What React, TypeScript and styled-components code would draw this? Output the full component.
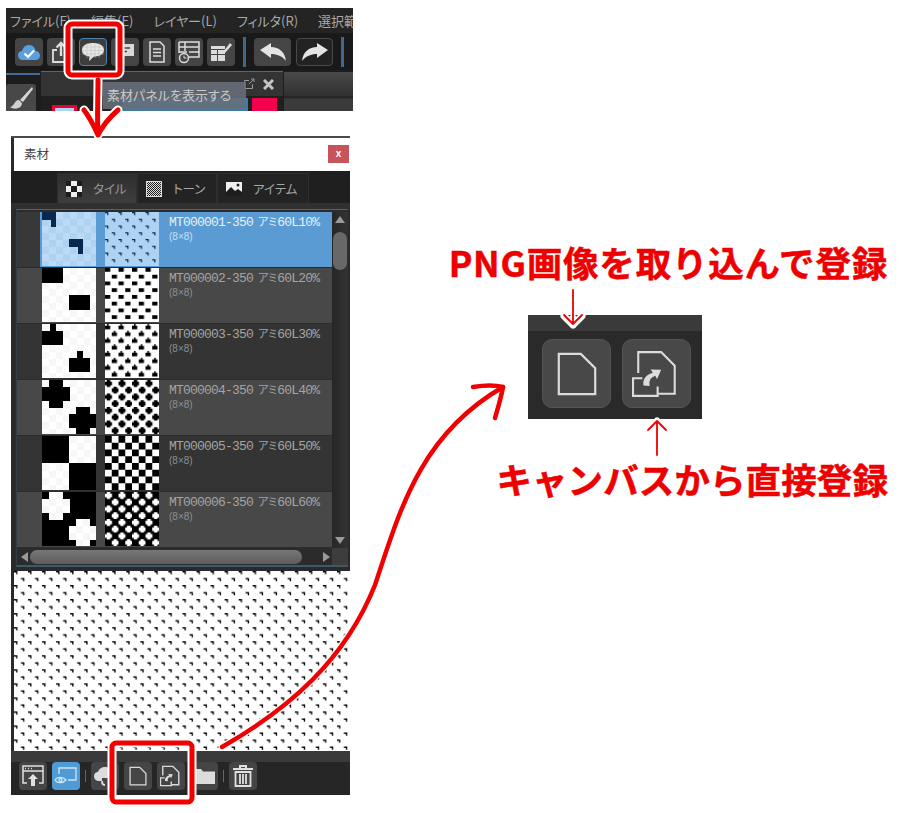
import React from 'react';
import styled, { createGlobalStyle } from 'styled-components';

const JP = `"Noto Sans CJK JP", "Noto Sans", sans-serif`;

const GlobalStyle = createGlobalStyle`
  html, body {
    margin: 0;
    background: #fff;
    font-family: ${JP};
  }
`;

const Page = styled.div`
  position: relative;
  width: 900px;
  height: 813px;
  overflow: hidden;
  display: flex;
  background: #fff;
`;

const LeftColumn = styled.div`
  width: 347px;
  margin-left: 6px;
  padding-top: 8px;
  display: flex;
  flex-direction: column;
`;

/* top screenshot */
const AppShot = styled.div`
  height: 103px;
  overflow: hidden;
  background: #222;
`;

const MenuBar = styled.div`
  height: 25px;
  display: flex;
  align-items: center;
  gap: 20px;
  padding-left: 4px;
  background: #242424;
  white-space: nowrap;
`;

const MenuItem = styled.span`
  font-size: 13px;
  font-feature-settings: "palt";
  color: #a8a8a8;
`;

const Toolbar = styled.div`
  height: 37px;
  display: flex;
  align-items: center;
  padding-left: 9px;
  background: #191919;
`;

const ToolGroup = styled.div<{ $gap: number }>`
  display: flex;
  gap: ${p => p.$gap}px;
`;

const Divider = styled.div<{ $space: number }>`
  width: 3px;
  height: 30px;
  margin: 0 ${p => p.$space}px 0 8px;
  background: #41678a;
`;

const ToolButton = styled.div<{ $tone?: 'selected' | 'dark' | 'active'; $wide?: boolean }>`
  width: ${p => (p.$wide ? 37 : 28)}px;
  height: 28px;
  box-sizing: border-box;
  display: flex;
  align-items: center;
  justify-content: center;
  border-radius: 4px;
  background: ${p => (p.$tone === 'active' ? '#4f9bd6' : p.$tone === 'selected' ? '#3d3d3d' : p.$tone === 'dark' ? '#222' : '#454545')};
  border: 1px solid ${p => (p.$tone === 'selected' ? '#4c82ad' : p.$tone === 'dark' ? '#484848' : 'transparent')};
`;

const ShotPanels = styled.div`
  position: relative;
  height: 41px;
  overflow: hidden;
  display: flex;
  gap: 1px;
  background: #1d1d1d;
`;

const BrushDock = styled.div`
  width: 34px;
  height: 38px;
  border-top: 2px solid #3f6c92;
  margin-top: 3px;
  box-sizing: border-box;
  display: flex;
  align-items: flex-end;
`;

const BrushButton = styled.div`
  width: 30px;
  height: 27px;
  background: #484848;
  border-radius: 3px 3px 0 0;
  display: flex;
  align-items: center;
  justify-content: center;
`;

const ColorPanel = styled.div`
  width: 242px;
  height: 40px;
  display: flex;
  flex-direction: column;
  border-top: 1px solid #3f6c92;
  margin-top: 1px;
  box-sizing: border-box;
`;

const ColorHead = styled.div`
  height: 24px;
  flex: none;
  display: flex;
  align-items: center;
  justify-content: flex-end;
  gap: 8px;
  padding-right: 9px;
  background: #333;
`;

const ColorBody = styled.div`
  flex: 1;
  min-height: 0;
  display: flex;
  background: #202020;
`;

const Swatch = styled.div<{ $top: number; $left: number; $width: number; $fill: string; $edge?: string }>`
  box-sizing: border-box;
  width: ${p => p.$width}px;
  height: 24px;
  flex: none;
  margin-top: ${p => p.$top}px;
  margin-left: ${p => p.$left}px;
  background: ${p => p.$fill};
  border: ${p => (p.$edge ? `3px solid ${p.$edge}` : '0')};
`;

const SideDock = styled.div`
  flex: 1;
  margin-top: 2px;
  background: linear-gradient(#4a4a4a, #303030 24px, #1c1c1c 25px, #3b3b3b 27px);
`;

const Tooltip = styled.div`
  position: absolute;
  left: 97px;
  top: 12px;
  width: 143px;
  height: 27px;
  line-height: 25px;
  padding-left: 4px;
  box-sizing: border-box;
  font-size: 13px;
  font-feature-settings: "palt";
  color: #c9c9c9;
  white-space: nowrap;
  background: rgba(104, 112, 122, 0.88);
`;

/* material panel */
const MaterialPanel = styled.div`
  width: 339px;
  height: 659px;
  margin: 25px 0 0 5px;
  display: flex;
  flex-direction: column;
  background: #2a2a2a;
  border-top: 2px solid #4a4a4a;
  box-sizing: border-box;
`;

const TitleBar = styled.div`
  height: 33px;
  flex: none;
  display: flex;
  align-items: center;
  justify-content: space-between;
  margin-left: 3px;
  padding: 0 1px 2px 10px;
  box-sizing: border-box;
  background: #fff;
  font-size: 12.5px;
  color: #444;
`;

const CloseButton = styled.div`
  width: 21px;
  height: 18px;
  display: flex;
  align-items: center;
  justify-content: center;
  background: #c9535a;
  color: #fff;
  font: bold 10px "Liberation Sans", sans-serif;
`;

const TabRow = styled.div`
  height: 38px;
  flex: none;
  display: flex;
  padding: 2px 0 0 46px;
  box-sizing: border-box;
  background: linear-gradient(#1f1f1f 32px, #303030 32px);
`;

const Tab = styled.div<{ $active?: boolean; $width: number }>`
  width: ${p => p.$width}px;
  height: 30px;
  box-sizing: border-box;
  display: flex;
  align-items: center;
  gap: 11px;
  padding-left: 8px;
  font-size: 12.5px;
  font-feature-settings: "palt";
  color: ${p => (p.$active ? '#999' : '#a5a5a5')};
  background: ${p => (p.$active ? 'linear-gradient(#2e2e2e, #3e3e3e)' : '#232323')};
  border: 1px solid #2f2f2f;
  border-bottom: 0;
`;

const ListFrame = styled.div`
  margin-left: 5px;
  margin-right: 2px;
  height: 358px;
  flex: none;
  box-sizing: border-box;
  display: grid;
  grid-template-columns: 315px 16px;
  grid-template-rows: 336px 17px;
  padding-top: 2px;
  background: #2b2b2b;
  border-top: 1px solid #3d6a8c;
  border-bottom: 2px solid #3c5a6e;
  border-left: 1px solid #2f3f4a;
`;

const Rows = styled.div`
  display: flex;
  flex-direction: column;
  gap: 1px;
  overflow: hidden;
`;

const Row = styled.div<{ $selected: boolean; $dark: boolean }>`
  height: 55px;
  flex: none;
  display: flex;
  background: ${p => (p.$selected ? '#5a9bd3' : p.$dark ? '#343434' : '#484848')};
`;

const RowGutter = styled.div<{ $selected: boolean }>`
  width: 23px;
  flex: none;
  margin-right: 2px;
  background: ${p => (p.$selected ? '#383838' : 'transparent')};
`;

const Thumb = styled.svg`
  width: 54px;
  height: 54px;
  flex: none;
  display: block;
`;

const PatternThumb = styled(Thumb)`
  margin: 0 10px 0 9px;
`;

const RowText = styled.div<{ $selected: boolean }>`
  color: ${p => (p.$selected ? '#e6f0f8' : '#a4a4a4')};
  padding-top: 1px;
  white-space: nowrap;
`;

const RowName = styled.div`
  font-family: "Liberation Mono", ${JP};
  font-size: 13px;
  letter-spacing: -0.8px;
  line-height: 16px;
`;

const Kana = styled.span`
  font-family: ${JP};
  font-size: 11px;
  font-feature-settings: "palt";
  letter-spacing: 0;
  margin-left: 5px;
`;

const RowSize = styled.div`
  font-family: "Liberation Sans", sans-serif;
  font-size: 10px;
  line-height: 12px;
  opacity: 0.8;
`;

const VScroll = styled.div`
  display: flex;
  flex-direction: column;
  align-items: center;
  justify-content: space-between;
  padding: 3px 0;
  box-sizing: border-box;
  position: relative;
  background: linear-gradient(90deg, #262626, #333);
`;

const VThumb = styled.div`
  position: absolute;
  top: 20px;
  left: 1px;
  width: 14px;
  height: 38px;
  border-radius: 7px;
  background: #686868;
`;

const HScroll = styled.div`
  display: flex;
  align-items: center;
  padding: 0 3px;
  background: #2b2b2b;
`;

const HThumb = styled.div`
  width: 272px;
  height: 14px;
  margin: 0 21px 0 2px;
  border-radius: 7px;
  background: linear-gradient(#777, #5d5d5d);
  flex: none;
`;

const Corner = styled.div`
  background: #3d3d3d;
`;

const Triangle = styled.div<{ $dir: 'up' | 'down' | 'left' | 'right' }>`
  width: 0;
  height: 0;
  flex: none;
  z-index: 1;
  border-style: solid;
  border-color: transparent;
  ${p => (p.$dir === 'up' || p.$dir === 'down' ? 'border-width: 7px 5px; ' : 'border-width: 5px 7px; ')}
  ${p => `border-${{ up: 'bottom', down: 'top', left: 'right', right: 'left' }[p.$dir]}-color: #9a9a9a;`}
  ${p => `margin-${p.$dir === 'up' ? 'top' : p.$dir === 'down' ? 'bottom' : p.$dir === 'left' ? 'left' : 'right'}: -6px;`}
`;

const Preview = styled.svg`
  display: block;
  width: 336px;
  height: 180px;
  flex: none;
  margin: 4px 0 0 3px;
`;

const BottomBar = styled.div`
  flex: 1;
  display: flex;
  align-items: flex-start;
  gap: 5px;
  padding: 11px 0 0 8px;
  background: linear-gradient(#3a3a3a 11px, #262626 11px);
`;

const BarDivider = styled.div`
  width: 1px;
  height: 12px;
  margin: 8px 0;
  background: #666;
`;

/* right side callout */
const RightColumn = styled.div`
  flex: 1;
  display: flex;
  flex-direction: column;
  align-items: flex-end;
  padding: 237px 12px 0 0;
`;

const Heading = styled.div<{ $space: number; $tracking: number }>`
  font-size: 35.5px;
  font-weight: 700;
  line-height: 50px;
  letter-spacing: ${p => p.$tracking}px;
  -webkit-text-stroke: 0.5px #ef0000;
  color: #ef0000;
  white-space: nowrap;
  margin-top: ${p => p.$space}px;
`;

const Callout = styled.div`
  width: 174px;
  height: 104px;
  margin: 28px 186px 0 0;
  box-sizing: border-box;
  display: flex;
  gap: 11px;
  padding: 24px 0 0 14px;
  background: linear-gradient(#3a3a3a 16px, #2a2a2a 16px);
`;

const CalloutButton = styled.div`
  width: 69px;
  height: 69px;
  box-sizing: border-box;
  border-radius: 10px;
  border: 1px solid #545454;
  background: #484848;
  display: flex;
  align-items: center;
  justify-content: center;
`;

const Annotations = styled.svg`
  position: absolute;
  left: 0;
  top: 0;
  width: 900px;
  height: 813px;
  pointer-events: none;
`;

/* icons */
const DocIcon = ({ size, stroke = 1.15 }: { size: number; stroke?: number }) => (
  <svg width={size} height={size} viewBox="0 0 24 24" fill="none" stroke="#dcdcdc" strokeWidth={stroke}>
    <path d="M2.500 1.500H14L21.500 9V22.500H2.500Z" />
  </svg>
);

const CanvasDocIcon = ({ size, stroke = 1 }: { size: number; stroke?: number }) => (
  <svg width={size} height={size} viewBox="0 0 24 24" fill="none" stroke="#dcdcdc" strokeWidth={stroke}>
    <path d="M3 11.500V1.500H14L20.500 8V21.500H12.300" />
    <path d="M5 14H0.500V22.500H12.300V18" />
    <path d="M5.500 17.500C5 14.500 7 12 10 11.500L9 9.800L14 10L12 14.500L11.200 12.800C9 13.500 8 15 8.500 17.800Z" fill="#dcdcdc" stroke="none" />
  </svg>
);

const CloudCheck = () => (
  <svg width="24" height="20" viewBox="0 0 24 20">
    <path d="M6 18C2.500 18 1 15.500 1 13C1 10.500 3 9 5 9C6 5 9 3 12 3C16 3 18.500 6 18.500 9C21 9 23 11 23 13.500C23 16.500 21 18 18 18Z" fill="#5b9fe0" />
    <path d="M7.500 11.500L11 15L17 8.500" fill="none" stroke="#fff" strokeWidth="2.200" />
  </svg>
);

const ShareIcon = () => (
  <svg width="22" height="24" viewBox="0 0 22 24" fill="none" stroke="#ddd" strokeWidth="1.800">
    <path d="M7 10H3V22H19V10H15" />
    <path d="M11 16V3M6.500 7.500L11 3L15.500 7.500" strokeWidth="2.400" />
  </svg>
);

const BalloonIcon = () => (
  <svg width="24" height="22" viewBox="0 0 24 22">
    <path d="M12 2C18 2 23 4.500 23 9C23 13.500 18 15.500 13 15.500L8 20L8.500 15.500C4 15 1 12.500 1 9C1 4.500 6 2 12 2Z" fill="#e6e6e6" />
    <path d="M1 6H23M1 9.500H23M1 13H23M6 2V17M10 2V17M14 2V17M18 2V17" stroke="#bbb" strokeWidth="0.500" />
  </svg>
);

const NoteIcon = () => (
  <svg width="22" height="20" viewBox="0 0 22 20">
    <path d="M2 2H20V14H11L6 18V14H2Z" fill="#d9d9d9" />
    <path d="M6 6H16M6 9.500H13" stroke="#454545" strokeWidth="1.600" />
  </svg>
);

const PageIcon = () => (
  <svg width="18" height="22" viewBox="0 0 18 22" fill="none" stroke="#ddd" strokeWidth="1.500">
    <path d="M2 1H12L16 5V21H2Z" />
    <path d="M5 8H13M5 11.500H13M5 15H13" />
  </svg>
);

const ListClockIcon = () => (
  <svg width="24" height="24" viewBox="0 0 24 24" fill="none" stroke="#ddd" strokeWidth="1.500">
    <path d="M2 2H22V17H12M2 2V13M2 7H22M2 12H10M8 2V11M22 12H12" />
    <circle cx="7" cy="18" r="4.500" />
    <path d="M7 15.500V18H9.500" strokeWidth="1" />
  </svg>
);

const TablePenIcon = () => (
  <svg width="24" height="24" viewBox="0 0 24 24">
    <path d="M2 6H16V9H2ZM2 10H8V14H2ZM9 10H16V14H9ZM2 15H8V21H2ZM9 15H16V21H9Z" fill="#dcdcdc" />
    <path d="M14 12L21 3L23 5L16 13Z" fill="#dcdcdc" />
  </svg>
);

const TurnArrow = ({ flip }: { flip?: boolean }) => (
  <svg width="28" height="20" viewBox="0 0 28 20" style={flip ? { transform: 'scaleX(-1)' } : undefined}>
    <path d="M1 8L12 1V5C20 5 26 10 27 19C23 14 18 12 12 12V16Z" fill="#e4e4e4" />
  </svg>
);

const BrushIcon = () => (
  <svg width="26" height="26" viewBox="0 0 26 26">
    <path d="M24 2L12 15L15 17L25 4Z" fill="#d6d6d6" />
    <path d="M11 15C6 15 7 21 2 22C6 25 14 24 14 18Z" fill="#cfcfcf" />
  </svg>
);

const DetachIcon = () => (
  <svg width="12" height="12" viewBox="0 0 12 12" fill="none" stroke="#9a9a9a" strokeWidth="1">
    <path d="M6 2.500H1.500V10.500H9.500V6M6 6L11 1M8 1H11V4" />
  </svg>
);

const CloseGlyph = () => (
  <svg width="11" height="11" viewBox="0 0 11 11" stroke="#c4c4c4" strokeWidth="3">
    <path d="M1 1L10 10M10 1L1 10" />
  </svg>
);

const TileTabIcon = () => (
  <svg width="16" height="16" viewBox="0 0 16 16">
    <rect width="16" height="16" fill="#eee" />
    <path d="M0 0H5V5H0ZM11 0H16V5H11ZM5 5H11V11H5ZM0 11H5V16H0ZM11 11H16V16H11Z" fill="#1d1d1d" />
  </svg>
);

const ToneTabIcon = () => (
  <svg width="16" height="16" viewBox="0 0 16 16">
    <defs>
      <pattern id="tone-tab" width="2" height="2" patternUnits="userSpaceOnUse">
        <rect width="2" height="2" fill="#222" />
        <rect width="1" height="1" fill="#ddd" />
        <rect x="1" y="1" width="1" height="1" fill="#ddd" />
      </pattern>
    </defs>
    <rect x="0.500" y="0.500" width="15" height="15" fill="url(#tone-tab)" stroke="#ddd" />
  </svg>
);

const ItemTabIcon = () => (
  <svg width="16" height="16" viewBox="0 0 16 16">
    <rect y="1" width="16" height="14" fill="#eee" />
    <path d="M0 11L5 6L9 10L12 8L16 11V15H0Z" fill="#1d1d1d" />
    <circle cx="12" cy="4" r="1.500" fill="#1d1d1d" />
  </svg>
);

const WindowUpIcon = () => (
  <svg width="24" height="24" viewBox="0 0 24 24" fill="none" stroke="#e0e0e0" strokeWidth="1.500">
    <path d="M6 19H2V2H22V19H18M2 7H22" />
    <path d="M4 4.500H5M7 4.500H8M10 4.500H11" strokeWidth="1.600" />
    <path d="M12 10L17 15H14V22H10V15H7Z" fill="#e0e0e0" stroke="none" />
  </svg>
);

const ScreenEyeIcon = () => (
  <svg width="24" height="22" viewBox="0 0 24 22" fill="none" stroke="#cfe4f5" strokeWidth="1.300">
    <path d="M5 9V3H22V15H14" />
    <path d="M1 15C3 11.500 9 11.500 12 15C9 18.500 3 18.500 1 15Z" />
    <circle cx="6.500" cy="15" r="1.500" />
  </svg>
);

const CloudIcon = () => (
  <svg width="24" height="22" viewBox="0 0 24 22">
    <path d="M6 16C2.500 16 1 13.500 1 11C1 8.500 3 7 5 7C6 3.500 9 2 12 2C16 2 18.500 4.500 18.500 7C21 7 23 9 23 11.500C23 14.500 21 16 18 16Z" fill="#dcdcdc" />
    <path d="M9 13H15V21H9Z" fill="#454545" />
    <path d="M12 20C9.500 20 8.500 18 9.500 16" stroke="#dcdcdc" strokeWidth="2" fill="none" />
  </svg>
);

const FolderIcon = () => (
  <svg width="24" height="20" viewBox="0 0 24 20">
    <path d="M1 3H9L11 5.500H23V18H1Z" fill="#dcdcdc" />
  </svg>
);

const TrashIcon = () => (
  <svg width="22" height="24" viewBox="0 0 22 24" fill="none" stroke="#e0e0e0">
    <path d="M1 5H21M8 5V2H14V5" strokeWidth="2" />
    <path d="M3.500 8H18.500V22H3.500Z" strokeWidth="1.800" />
    <path d="M8 10V20M11 10V20M14 10V20" strokeWidth="1.800" />
  </svg>
);

/* tile shapes on a 54 unit cell, two copies offset by a half */
const PLUS = 'M7 0H21V7H28V21H21V28H7V21H0V7H7Z';
const SMALL_DOT = 'M0 0H13V13H8V5H0Z';
const SHAPES: { d: string; tone?: string; inverse?: boolean }[] = [
  { d: 'M0 0H14V15H9V8H0Z', tone: SMALL_DOT },
  { d: 'M0 0H21V15H0Z' },
  { d: 'M8 0H14V7H21V21H0V7H8Z' },
  { d: PLUS },
  { d: 'M0 0H27V27H0Z' },
  { d: PLUS, inverse: true },
];

const TileShape = ({ d, inverse, ink, paper }: { d: string; inverse?: boolean; ink: string; paper: string }) => (
  <>
    {inverse && <rect width="54" height="54" fill={ink} />}
    <path d={d} fill={inverse ? paper : ink} />
    <path d={d} fill={inverse ? paper : ink} transform="translate(27 27)" />
  </>
);

const ITEMS = ['10', '20', '30', '40', '50', '60'];

const TileRow = ({ index, percent }: { index: number; percent: string }) => {
  const selected = index === 0;
  const ink = selected ? '#08294d' : '#000';
  const paper = selected ? '#aed2f2' : '#fff';
  const shade = selected ? '#bcdaf5' : '#f7f7f7';
  const shape = SHAPES[index];
  return (
    <Row $selected={selected} $dark={index % 2 === 0}>
      <RowGutter $selected={selected} />
      <Thumb viewBox="0 0 54 54">
        <defs>
          <pattern id={`check-${index}`} width="14" height="14" patternUnits="userSpaceOnUse">
            <rect width="14" height="14" fill={paper} />
            <rect width="7" height="7" fill={shade} />
            <rect x="7" y="7" width="7" height="7" fill={shade} />
          </pattern>
        </defs>
        <rect width="54" height="54" fill={`url(#check-${index})`} />
        <TileShape d={shape.d} inverse={shape.inverse} ink={ink} paper={shape.inverse ? `url(#check-${index})` : paper} />
      </Thumb>
      <PatternThumb viewBox="0 0 54 54">
        <defs>
          <pattern id={`tone-${index}`} width="54" height="54" patternUnits="userSpaceOnUse" patternTransform="scale(0.25)">
            <rect width="54" height="54" fill={paper} />
            <TileShape d={shape.tone ?? shape.d} inverse={shape.inverse} ink={ink} paper={paper} />
          </pattern>
        </defs>
        <rect width="54" height="54" fill={`url(#tone-${index})`} />
      </PatternThumb>
      <RowText $selected={selected}>
        <RowName>
          MT00000{index + 1}-350<Kana>アミ</Kana>60L{percent}%
        </RowName>
        <RowSize>(8×8)</RowSize>
      </RowText>
    </Row>
  );
};

const App: React.FC = () => (
  <Page>
    <GlobalStyle />
    <LeftColumn>
      <AppShot>
        <MenuBar>
          <MenuItem>ファイル(F)</MenuItem>
          <MenuItem>編集(E)</MenuItem>
          <MenuItem>レイヤー(L)</MenuItem>
          <MenuItem>フィルタ(R)</MenuItem>
          <MenuItem>選択範囲</MenuItem>
        </MenuBar>
        <Toolbar>
          <ToolGroup $gap={4}>
            <ToolButton><CloudCheck /></ToolButton>
            <ToolButton><ShareIcon /></ToolButton>
            <ToolButton $tone="selected"><BalloonIcon /></ToolButton>
            <ToolButton><NoteIcon /></ToolButton>
            <ToolButton><PageIcon /></ToolButton>
            <ToolButton><ListClockIcon /></ToolButton>
            <ToolButton><TablePenIcon /></ToolButton>
          </ToolGroup>
          <Divider $space={8} />
          <ToolGroup $gap={5}>
            <ToolButton $wide><TurnArrow /></ToolButton>
            <ToolButton $wide $tone="dark"><TurnArrow flip /></ToolButton>
          </ToolGroup>
          <Divider $space={0} />
        </Toolbar>
        <ShotPanels>
          <BrushDock>
            <BrushButton><BrushIcon /></BrushButton>
          </BrushDock>
          <ColorPanel>
            <ColorHead>
              <DetachIcon />
              <CloseGlyph />
            </ColorHead>
            <ColorBody>
              <Swatch $top={9} $left={11} $width={25} $fill="#a9d6f5" $edge="#f00030" />
              <Swatch $top={2} $left={45} $width={126} $fill="#3b7da6" />
              <Swatch $top={2} $left={4} $width={25} $fill="#f4004c" />
            </ColorBody>
          </ColorPanel>
          <SideDock />
          <Tooltip>素材パネルを表示する</Tooltip>
        </ShotPanels>
      </AppShot>

      <MaterialPanel>
        <TitleBar>
          素材
          <CloseButton>x</CloseButton>
        </TitleBar>
        <TabRow>
          <Tab $active $width={80}><TileTabIcon />タイル</Tab>
          <Tab $width={80}><ToneTabIcon />トーン</Tab>
          <Tab $width={92}><ItemTabIcon />アイテム</Tab>
        </TabRow>
        <ListFrame>
          <Rows>
            {ITEMS.map((percent, index) => (
              <TileRow key={percent} index={index} percent={percent} />
            ))}
          </Rows>
          <VScroll>
            <Triangle $dir="up" />
            <VThumb />
            <Triangle $dir="down" />
          </VScroll>
          <HScroll>
            <Triangle $dir="left" />
            <HThumb />
            <Triangle $dir="right" />
          </HScroll>
          <Corner />
        </ListFrame>
        <Preview viewBox="0 0 336 180">
          <defs>
            <pattern id="preview-tone" width="54" height="54" patternUnits="userSpaceOnUse" patternTransform="scale(0.26)">
              <rect width="54" height="54" fill="#fff" />
              <TileShape d={SMALL_DOT} ink="#000" paper="#fff" />
            </pattern>
          </defs>
          <rect width="336" height="180" fill="url(#preview-tone)" />
        </Preview>
        <BottomBar>
          <ToolButton><WindowUpIcon /></ToolButton>
          <ToolButton $tone="active"><ScreenEyeIcon /></ToolButton>
          <BarDivider />
          <ToolButton><CloudIcon /></ToolButton>
          <ToolButton><DocIcon size={20} stroke={1.5} /></ToolButton>
          <ToolButton><CanvasDocIcon size={22} stroke={1.5} /></ToolButton>
          <ToolButton><FolderIcon /></ToolButton>
          <BarDivider />
          <ToolButton><TrashIcon /></ToolButton>
        </BottomBar>
      </MaterialPanel>
    </LeftColumn>

    <RightColumn>
      <Heading $space={0} $tracking={0.8}>PNG画像を取り込んで登録</Heading>
      <Callout>
        <CalloutButton><DocIcon size={46} /></CalloutButton>
        <CalloutButton><CanvasDocIcon size={50} /></CalloutButton>
      </Callout>
      <Heading $space={35} $tracking={0.1}>キャンバスから直接登録</Heading>
    </RightColumn>

    <Annotations viewBox="0 0 900 813" fill="none" strokeLinecap="round" strokeLinejoin="round">
      <g stroke="#fff" strokeWidth="9">
        <rect x="68" y="24" width="52" height="51" rx="4" />
        <path d="M98 80C98 100 97 120 98 135M84 110C90 118 94 126 98 135C103 125 110 117 118 110" />
        <rect x="112" y="743" width="80" height="59" rx="4" />
        <path d="M222 747C290 708 345 660 375 585C400 510 420 435 503 387" strokeWidth="7" />
      </g>
      <g stroke="#f00000" strokeWidth="5">
        <rect x="68" y="24" width="52" height="51" rx="4" />
        <path d="M98 80C98 100 97 120 98 135M84 110C90 118 94 126 98 135C103 125 110 117 118 110" />
        <rect x="112" y="743" width="80" height="59" rx="4" />
      </g>
      <g stroke="#f00000" strokeWidth="4.500">
        <path d="M222 747C290 708 345 660 375 585C400 510 420 435 503 387" />
        <path d="M473 387C485 385 495 385 503 387C501 398 498 408 495 418" />
      </g>
      <g stroke="#fff" strokeWidth="7">
        <path d="M573 318V325L564 316M573 325L582 316" />
        <path d="M657 421L651 427M657 421L663 427" />
      </g>
      <g stroke="#ee0000" strokeWidth="1.800">
        <path d="M573 290V324M564 315L573 324L582 315" />
        <path d="M657 421V455M648 430L657 421L666 430" />
      </g>
    </Annotations>
  </Page>
);

export default App;
